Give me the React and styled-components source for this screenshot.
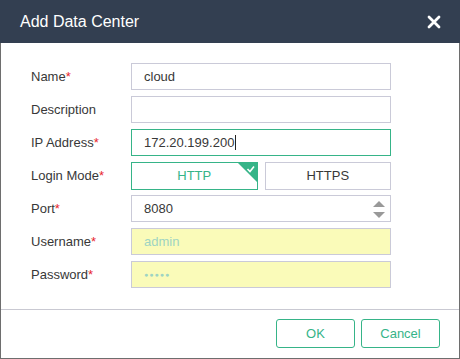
import React from 'react'
import styled, { createGlobalStyle } from 'styled-components'

const Global = createGlobalStyle`
  html, body { margin: 0; padding: 0; background: #fff; }
  body { font-family: "Liberation Sans", Arial, sans-serif; }
  * { box-sizing: border-box; }
`

const green = '#36b488'

const Dialog = styled.div`
  width: 460px;
  height: 359px;
  display: flex;
  flex-direction: column;
  background: #fff;
  border: 1px solid #6e6e6e;
  border-top: 0;
`

const Header = styled.div`
  height: 43px;
  margin: 0 -1px;
  background: #333f51;
  display: flex;
  align-items: center;
  justify-content: space-between;
  padding: 0 19px 0 20px;
  color: #fff;

  h1 {
    margin: 0;
    font-size: 16px;
    font-weight: normal;
    line-height: 1;
  }
`

const Body = styled.div`
  flex: 1;
  padding: 20px 68px 0 30px;
  display: flex;
  flex-direction: column;
  gap: 6px;
`

const Row = styled.div`
  display: flex;
  align-items: center;
  height: 27px;
`

const Label = styled.div`
  width: 100px;
  font-size: 13px;
  color: #383838;

  span { color: #e8262d; }
`

const Field = styled.div`
  position: relative;
  flex: 1;
  height: 27px;
  display: flex;
  align-items: center;
  padding: 0 12px;
  font-size: 13px;
  color: ${p => (p.$filled ? '#9ed4c3' : '#383838')};
  background: ${p => (p.$filled ? '#fafbb9' : '#fff')};
  border: 1px solid ${p => (p.$active ? green : '#cacad8')};
`

const Caret = styled.span`
  display: inline-block;
  width: 1px;
  height: 15px;
  background: #222;
  margin-left: 1px;
`

const Toggle = styled.div`
  flex: 1;
  display: flex;
  gap: 7px;
  height: 28px;
`

const ModeBtn = styled.div`
  position: relative;
  flex: 1;
  display: flex;
  align-items: center;
  justify-content: center;
  font-size: 13px;
  color: ${p => (p.$on ? green : '#383838')};
  border: 1px solid ${p => (p.$on ? green : '#cacad8')};
`

const Corner = styled.svg`
  position: absolute;
  top: 0;
  right: 0;
`

const Spinner = styled.svg`
  position: absolute;
  right: 4px;
  top: 4px;
`

const Dots = styled.span`
  font-size: 7px;
  letter-spacing: 1px;
`

const Footer = styled.div`
  height: 49px;
  border-top: 1px solid #c9c9d2;
  display: flex;
  justify-content: flex-end;
  gap: 6px;
  padding: 9px 19px 0 0;
`

const Button = styled.button`
  width: 79px;
  height: 29px;
  background: #fff;
  border: 1px solid ${green};
  border-radius: 3px;
  color: ${green};
  font-family: inherit;
  font-size: 13px;
  padding: 0;
`

const Req = () => <span>*</span>

export default function App() {
  return (
    <>
      <Global />
      <Dialog>
        <Header>
          <h1>Add Data Center</h1>
          <svg width="14" height="14" viewBox="0 0 14 14">
            <path d="M2 2 L12 12 M12 2 L2 12" stroke="#fff" strokeWidth="2.8" strokeLinecap="round" />
          </svg>
        </Header>
        <Body>
          <Row>
            <Label>Name<Req /></Label>
            <Field>cloud</Field>
          </Row>
          <Row>
            <Label>Description</Label>
            <Field />
          </Row>
          <Row>
            <Label>IP Address<Req /></Label>
            <Field $active>172.20.199.200<Caret /></Field>
          </Row>
          <Row>
            <Label>Login Mode<Req /></Label>
            <Toggle>
              <ModeBtn $on>
                HTTP
                <Corner width="19" height="19" viewBox="0 0 19 19">
                  <path d="M0 0 H19 V19 Z" fill={green} />
                  <path d="M9.5 6 L12 8.5 L16 3.5" stroke="#fff" strokeWidth="1.6" fill="none" />
                </Corner>
              </ModeBtn>
              <ModeBtn>HTTPS</ModeBtn>
            </Toggle>
          </Row>
          <Row>
            <Label>Port<Req /></Label>
            <Field>
              8080
              <Spinner width="14" height="19" viewBox="0 0 14 19">
                <path d="M7 1 L13 7 H1 Z" fill="#999" />
                <path d="M7 18 L13 12 H1 Z" fill="#999" />
              </Spinner>
            </Field>
          </Row>
          <Row>
            <Label>Username<Req /></Label>
            <Field $filled>admin</Field>
          </Row>
          <Row>
            <Label>Password<Req /></Label>
            <Field $filled><Dots>●●●●●</Dots></Field>
          </Row>
        </Body>
        <Footer>
          <Button>OK</Button>
          <Button>Cancel</Button>
        </Footer>
      </Dialog>
    </>
  )
}
